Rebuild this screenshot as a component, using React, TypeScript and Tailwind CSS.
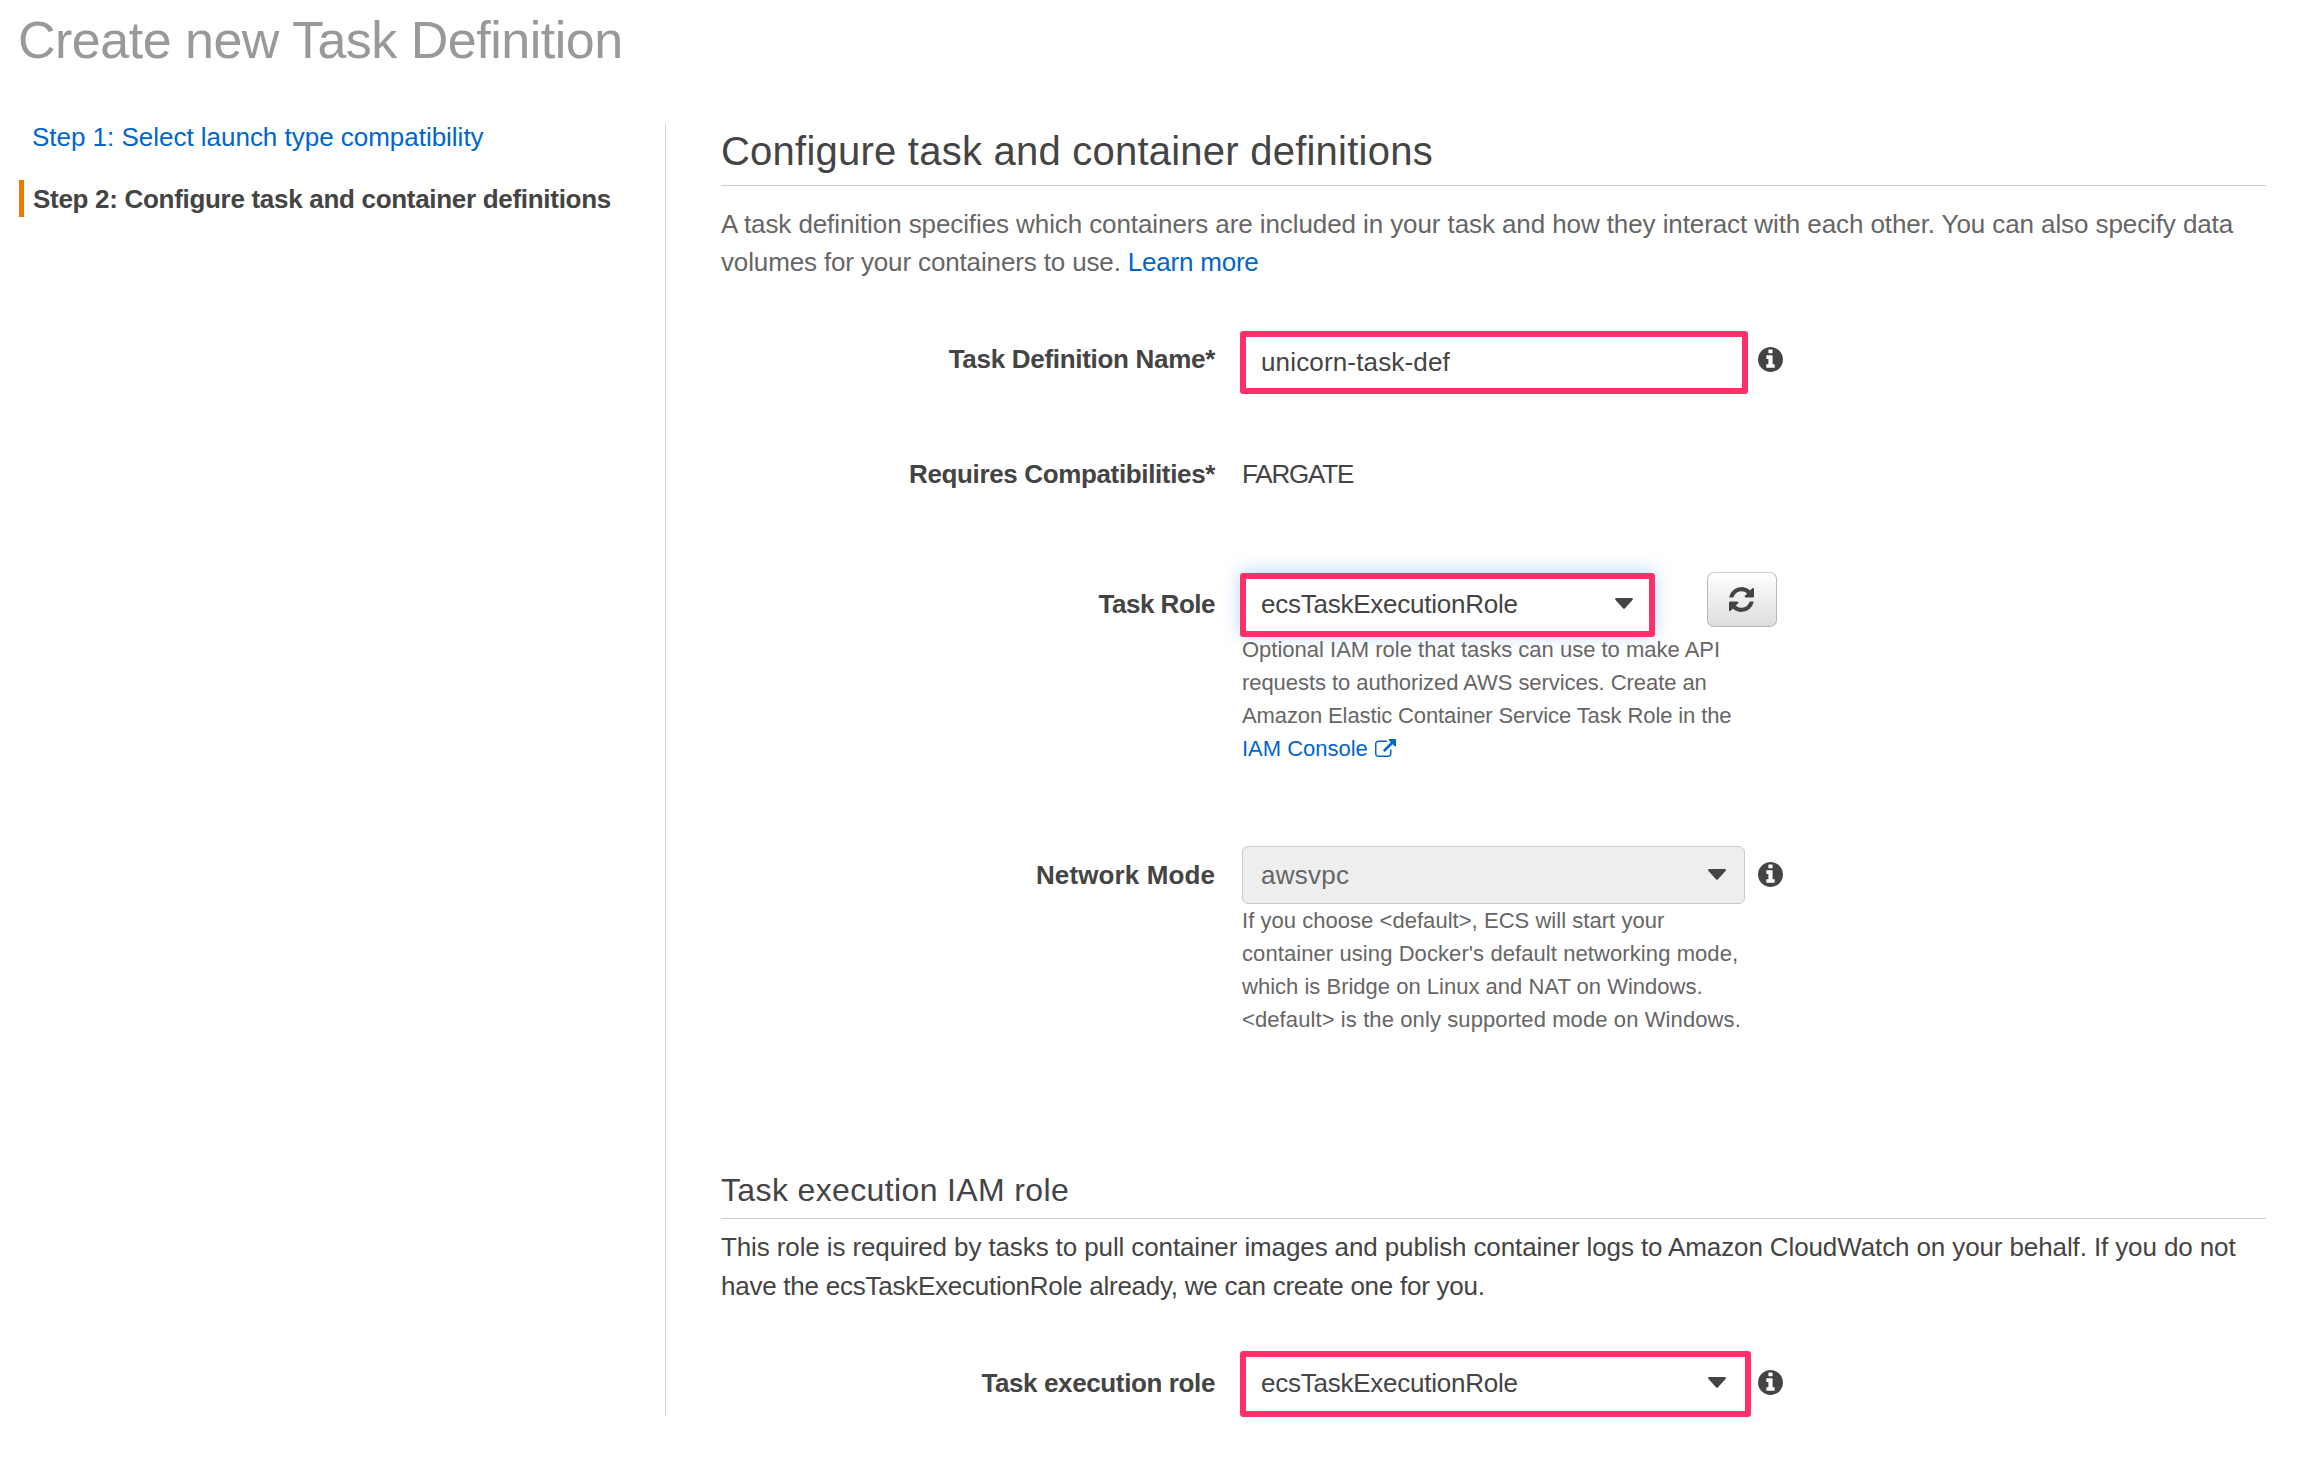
import type { ReactNode } from "react";

function InfoIcon({ className }: { className: string }) {
  return (
    <svg viewBox="128 128 1536 1536" className={`h-[25px] w-[25px] shrink-0 fill-[#444444] ${className}`}>
      <path d="M1152 1376v-160q0-14-9-23t-23-9h-96v-512q0-14-9-23t-23-9h-320q-14 0-23 9t-9 23v160q0 14 9 23t23 9h96v320h-96q-14 0-23 9t-9 23v160q0 14 9 23t23 9h448q14 0 23-9t9-23zm-128-896v-160q0-14-9-23t-23-9h-192q-14 0-23 9t-9 23v160q0 14 9 23t23 9h192q14 0 23-9t9-23zm640 416q0 209-103 385.5t-279.5 279.5-385.5 103-385.5-103-279.5-279.5-103-385.5 103-385.5 279.5-279.5 385.5-103 385.5 103 279.5 279.5 103 385.5z" />
    </svg>
  );
}

function RefreshIcon() {
  return (
    <svg viewBox="128 128 1536 1536" className="mb-px mr-px h-[25px] w-[25px] fill-[#444444]">
      <path d="M1639 1056q0 5-1 7-64 268-268 434.5t-478 166.5q-146 0-282.5-55t-243.5-157l-129 129q-19 19-45 19t-45-19-19-45v-448q0-26 19-45t45-19h448q26 0 45 19t19 45-19 45l-137 137q71 66 161 102t187 36q134 0 250-65t186-179q11-17 53-117 8-23 30-23h192q13 0 22.5 9.5t9.5 22.5zm25-800v448q0 26-19 45t-45 19h-448q-26 0-45-19t-19-45 19-45l138-138q-148-137-349-137-134 0-250 65t-186 179q-11 17-53 117-8 23-30 23h-199q-13 0-22.5-9.5t-9.5-22.5v-7q65-268 270-434.5t480-166.5q146 0 284 55.5t245 156.5l130-129q19-19 45-19t45 19 19 45z" />
    </svg>
  );
}

function ExternalLinkIcon() {
  return (
    <svg viewBox="0 0 1792 1536" className="mb-[-1px] ml-[7px] inline-block h-[18px] w-[21px] fill-[#0066cc] align-baseline">
      <path d="M1408 928v320q0 119-84.5 203.5t-203.5 84.5h-832q-119 0-203.5-84.5t-84.5-203.5v-832q0-119 84.5-203.5t203.5-84.5h704q14 0 23 9t9 23v64q0 14-9 23t-23 9h-704q-66 0-113 47t-47 113v832q0 66 47 113t113 47h832q66 0 113-47t47-113v-320q0-14 9-23t23-9h64q14 0 23 9t9 23zm384-864v512q0 26-19 45t-45 19-45-19l-176-176-652 652q-10 10-23 10t-23-10l-114-114q-10-10-10-23t10-23l652-652-176-176q-19-19-19-45t19-45 45-19h512q26 0 45 19t19 45z" />
    </svg>
  );
}

function Caret() {
  return (
    <svg viewBox="0 0 18 11" className="mb-px h-[11px] w-[18px] fill-[#444444]">
      <path d="M1 0h16q1.600.600.500 2L10 10.200q-1 1-2 0L.500 2Q-.600.600 1 0z" />
    </svg>
  );
}

function Row({ label, className, labelClass, children }: { label: string; className: string; labelClass: string; children: ReactNode }) {
  return (
    <div className={`flex items-start ${className}`}>
      <div className={`w-[494px] shrink-0 text-right font-bold leading-[30px] ${labelClass}`}>{label}</div>
      {children}
    </div>
  );
}

export default function App() {
  return (
    <div className="h-[1458px] w-[2302px] overflow-hidden whitespace-nowrap bg-white font-['Liberation_Sans',Arial,sans-serif] text-[26px] text-[#444444]">
      <header className="h-[124px] pl-[18px] pt-[10px]">
        <h1 className="text-[52px] leading-[60px] tracking-[-0.5px] text-[#999999]">Create new Task Definition</h1>
      </header>
      <div className="flex h-[1292px]">
        <nav className="w-[665px] shrink-0 pl-[19px]">
          <a className="block pl-[13px] leading-[26px] tracking-[-0.02px] text-[#0066cc]">Step 1: Select launch type compatibility</a>
          <div className="mt-[30px] h-[37px] border-l-[5px] border-[#f07700] pl-[9px] font-bold leading-[39px] tracking-[-0.3px]">
            Step 2: Configure task and container definitions
          </div>
        </nav>
        <main className="w-[1601px] border-l border-[#d5d5d5] pl-[55px] pt-[5px]">
          <h2 className="h-[57px] border-b border-[#cccccc] text-[40px] leading-[44px] tracking-[0.23px]">
            Configure task and container definitions
          </h2>
          <p className="mt-[19px] leading-[38px] text-[#666666]">
            <span className="block tracking-[-0.094px]">
              A task definition specifies which containers are included in your task and how they interact with each other. You can also specify data
            </span>
            <span className="block">
              <span className="tracking-[-0.14px]">volumes for your containers to use. </span>
              <a className="tracking-[-0.22px] text-[#0066cc]">Learn more</a>
            </span>
          </p>

          <Row label="Task Definition Name*" className="mt-[50px] h-[63px]" labelClass="mt-[13px] tracking-[-0.3px]">
            <div className="ml-[25px] flex h-[63px] w-[508px] items-center rounded-[3px] border-[6px] border-[#ff3069] pl-[15px] tracking-[0.154px]">
              unicorn-task-def
            </div>
            <InfoIcon className="ml-[10px] mt-[16px]" />
          </Row>

          <Row label="Requires Compatibilities*" className="mt-[65px] h-[30px]" labelClass="tracking-[-0.36px]">
            <div className="ml-[27px] leading-[30px] tracking-[-1.181px]">FARGATE</div>
          </Row>

          <Row label="Task Role" className="mt-[84px] h-[192px]" labelClass="mt-[16px] tracking-[-0.492px]">
            <div className="ml-[25px]">
              <div className="flex items-start">
                <div className="flex h-[64px] w-[415px] items-center justify-between rounded-[3px] border-[6px] border-[#ff3069] pb-[2px] pl-[15px] pr-[16px] tracking-[-0.243px] shadow-[0_-2px_18px_rgba(60,140,240,0.35)]">
                  ecsTaskExecutionRole
                  <Caret />
                </div>
                <button className="-mt-px ml-[52px] flex h-[55px] w-[70px] items-center justify-center rounded-[7px] border border-[#b8b8b8] border-t-[#cccccc] bg-linear-to-b from-white to-[#dddddd]">
                  <RefreshIcon />
                </button>
              </div>
              <div className="relative -mt-[4px] pl-[2px] text-[22px] leading-[33px] text-[#666666]">
                <div>Optional IAM role that tasks can use to make API</div>
                <div className="tracking-[-0.06px]">requests to authorized AWS services. Create an</div>
                <div className="tracking-[-0.11px]">Amazon Elastic Container Service Task Role in the</div>
                <div className="tracking-[-0.021px] text-[#0066cc]">
                  IAM Console
                  <ExternalLinkIcon />
                </div>
              </div>
            </div>
          </Row>

          <Row label="Network Mode" className="mt-[81px] h-[190px]" labelClass="mt-[14px] tracking-[0.116px]">
            <div className="ml-[27px]">
              <div className="flex items-start">
                <div className="flex h-[58px] w-[503px] items-center justify-between rounded-[6px] border border-[#cccccc] bg-[#eeeeee] pl-[18px] pr-[18px] tracking-[0.261px] text-[#666666]">
                  awsvpc
                  <Caret />
                </div>
                <InfoIcon className="ml-[13px] mt-[16px]" />
              </div>
              <div className="text-[22px] leading-[33px] text-[#666666]">
                <div className="tracking-[0.039px]">If you choose &lt;default&gt;, ECS will start your</div>
                <div className="tracking-[0.083px]">container using Docker's default networking mode,</div>
                <div className="tracking-[0.01px]">which is Bridge on Linux and NAT on Windows.</div>
                <div className="tracking-[0.1px]">&lt;default&gt; is the only supported mode on Windows.</div>
              </div>
            </div>
          </Row>

          <h3 className="mt-[136px] h-[47px] border-b border-[#cccccc] text-[32px] leading-[36px] tracking-[0.368px]">Task execution IAM role</h3>
          <p className="mt-[9px] leading-[39px]">
            <span className="block tracking-[-0.113px]">
              This role is required by tasks to pull container images and publish container logs to Amazon CloudWatch on your behalf. If you do not
            </span>
            <span className="block tracking-[-0.25px]">have the ecsTaskExecutionRole already, we can create one for you.</span>
          </p>

          <Row label="Task execution role" className="mt-[45px] h-[66px]" labelClass="mt-[17px] tracking-[-0.38px]">
            <div className="ml-[25px] flex h-[66px] w-[511px] items-center justify-between rounded-[3px] border-[6px] border-[#ff3069] pb-[2px] pl-[15px] pr-[19px] tracking-[-0.243px]">
              ecsTaskExecutionRole
              <Caret />
            </div>
            <InfoIcon className="ml-[7px] mt-[19px]" />
          </Row>
        </main>
      </div>
    </div>
  );
}
